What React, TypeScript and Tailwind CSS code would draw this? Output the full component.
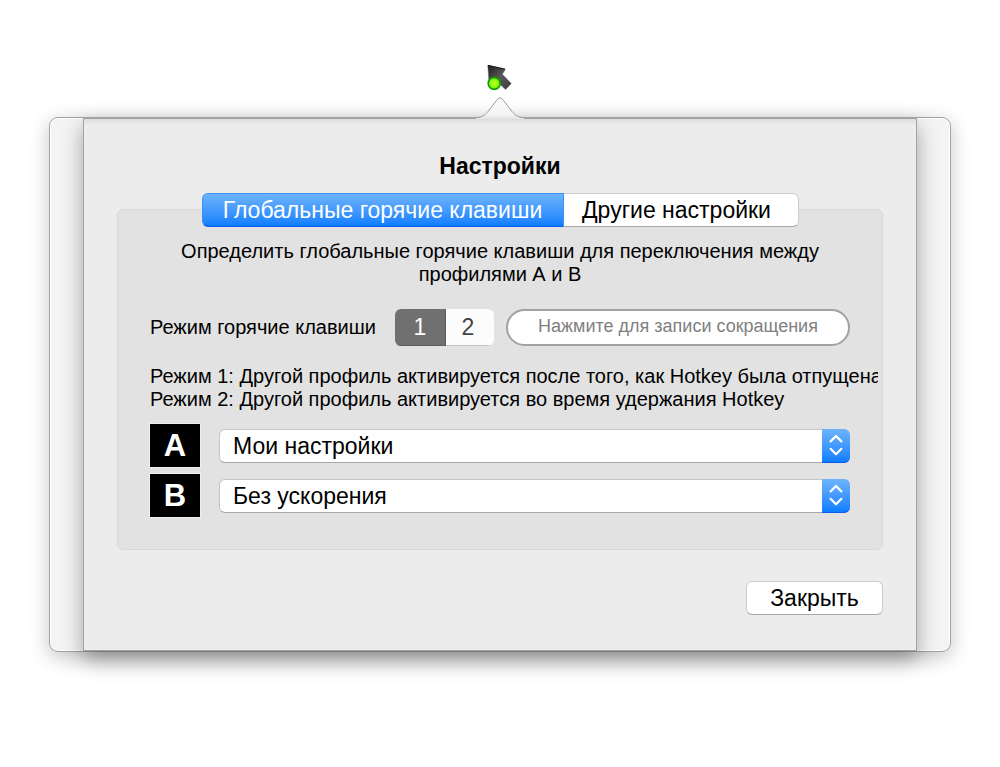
import { useState } from "react";
import type { ReactNode } from "react";

function CursorIcon() {
  return (
    <svg width="26" height="28" viewBox="0 0 26 28" aria-hidden="true">
      <defs>
        <linearGradient id="arrow" x1="0" y1="0" x2="1" y2="1">
          <stop offset="0" stopColor="#1c1c1c" />
          <stop offset="0.5" stopColor="#5a5a5a" />
          <stop offset="1" stopColor="#3c3838" />
        </linearGradient>
        <radialGradient id="dot">
          <stop offset="0" stopColor="#c8ff20" />
          <stop offset="0.6" stopColor="#8aff10" />
          <stop offset="1" stopColor="#6ee80c" />
        </radialGradient>
      </defs>
      <path d="M0.8 1.2L18.3 5.2L15.4 10.2L24.3 19.6L18.6 25.6L12 19.5L9 21L1.8 16Z" fill="url(#arrow)" stroke="#6b6b6b" strokeWidth="0.5" />
      <path d="M1 1.4L18 5.2" stroke="#111" strokeWidth="1" />
      <circle cx="7.2" cy="19.4" r="6" fill="url(#dot)" stroke="#12990c" strokeWidth="1.6" />
    </svg>
  );
}

function Notch() {
  return (
    <svg width="48" height="22" viewBox="0 0 48 22" className="relative z-10 -mb-[2px] block" aria-hidden="true">
      <defs>
        <linearGradient id="notch" x1="0" y1="0" x2="0" y2="1">
          <stop offset="0" stopColor="#fbfbfb" />
          <stop offset="0.8" stopColor="#f4f4f4" />
          <stop offset="1" stopColor="#e2e2e2" />
        </linearGradient>
      </defs>
      <path d="M0 20.5C6 20.5 9 18 12 14.5L20.5 3.5Q24 -2 27.5 3.5L36 14.5C39 18 42 20.5 48 20.5V22H0Z" fill="url(#notch)" />
      <path d="M0 20.5C6 20.5 9 18 12 14.5L20.5 3.5Q24 -2 27.5 3.5L36 14.5C39 18 42 20.5 48 20.5" fill="none" stroke="#9a9a9a" strokeWidth="1" />
    </svg>
  );
}

function ProfileRow({ letter, options }: { letter: string; options: string[] }) {
  const id = `profile-${letter}`;
  return (
    <div className="flex items-center gap-[19px]">
      <label
        htmlFor={id}
        className="flex h-[43px] w-[50px] shrink-0 items-center justify-center bg-black text-[31px] leading-none font-bold text-white shadow-[0_0_0_1px_#efefef]"
      >
        {letter}
      </label>
      <div className="relative grow">
        <select
          id={id}
          className="block h-[34px] w-full appearance-none rounded-[6px] border border-[#c6c6c6] border-b-[#a8a8a8] bg-white pr-10 pl-[13px] text-[23px] leading-[30px] text-black"
        >
          {options.map((o) => (
            <option key={o}>{o}</option>
          ))}
        </select>
        <span className="pointer-events-none absolute inset-y-0 right-0 flex w-7 items-center justify-center rounded-r-[6px] border-b border-[#0a5cf0] bg-linear-to-b from-[#6cb3fa] to-[#087eff]">
          <svg width="14" height="22" viewBox="0 0 14 22" fill="none" stroke="#fff" strokeWidth="2.2" strokeLinecap="round" strokeLinejoin="round" aria-hidden="true">
            <path d="M1.6 7.4L7 2L12.4 7.4M1.6 14.8L7 20.2L12.4 14.8" />
          </svg>
        </span>
      </div>
    </div>
  );
}

function ModeButton({ active, onClick, children }: { active: boolean; onClick: () => void; children: ReactNode }) {
  return (
    <button
      type="button"
      aria-pressed={active}
      onClick={onClick}
      className={
        active
          ? "w-[51px] border-r border-b border-[#5c5c5c] bg-[#707070] text-white"
          : "w-12 border-b border-[#c4c4c4] bg-[#fcfcfc] pr-1 text-[#444]"
      }
    >
      {children}
    </button>
  );
}

export default function App() {
  const [tab, setTab] = useState(0);
  const [mode, setMode] = useState(1);
  const on = "bg-linear-to-b from-[#6cb3fa] to-[#087eff] border-[#3d92f5] border-b-[#0a5cf0] text-white";
  const off = "bg-white border-[#cbcbcb] border-b-[#a8a8a8] text-black";

  return (
    <main className="flex min-h-screen flex-col items-center bg-white px-[49px] pt-16 pb-[116px] font-['Liberation_Sans',Arial,sans-serif] text-black">
      <CursorIcon />
      <div className="h-[5px]" />
      <Notch />
      <div className="w-full rounded-[9px] border border-[#a3a3a3] bg-[#f4f4f4] px-[33px] shadow-[0_5px_20px_rgba(0,0,0,0.24),inset_0_0_0_1px_#fff]">
        <section className="-mt-px border-x border-t-2 border-b border-[#a3a3a3] bg-[#ececec] bg-linear-to-b from-[#dcdcdc] to-[#ececec] to-[6px] px-[33px] pt-[33px] pb-[35px] shadow-[0_9px_20px_rgba(0,0,0,0.34)]">
          <h1 className="text-center text-[23px] leading-7 font-bold">Настройки</h1>
          <div role="tablist" className="relative z-10 mt-[13px] -mb-[18px] flex justify-center text-[23px] leading-8">
            <button
              type="button"
              role="tab"
              aria-selected={tab === 0}
              onClick={() => setTab(0)}
              className={`h-[34px] w-[362px] rounded-l-[6px] border whitespace-nowrap ${tab === 0 ? on : off}`}
            >
              Глобальные горячие клавиши
            </button>
            <button
              type="button"
              role="tab"
              aria-selected={tab === 1}
              onClick={() => setTab(1)}
              className={`h-[34px] w-[235px] rounded-r-[6px] border border-l-0 pr-2 whitespace-nowrap ${tab === 1 ? on : off}`}
            >
              Другие настройки
            </button>
          </div>
          <div role="tabpanel" className="rounded-[6px] border border-[#d8d8d8] bg-[#e2e2e2] pt-[30px] pb-8 pl-8">
            <p className="pr-8 text-center text-[20px] leading-[23px]">
              Определить глобальные горячие клавиши для переключения между
              <br />
              профилями А и В
            </p>
            <div className="mt-[23px] flex items-center pr-8">
              <span id="mode-label" className="w-[245px] shrink-0 pb-[2px] text-[20px] leading-6 whitespace-nowrap">Режим горячие клавиши</span>
              <div role="group" aria-labelledby="mode-label" className="flex h-[37px] shrink-0 overflow-hidden rounded-[6px] text-[23px]">
                <ModeButton active={mode === 1} onClick={() => setMode(1)}>1</ModeButton>
                <ModeButton active={mode === 2} onClick={() => setMode(2)}>2</ModeButton>
              </div>
              <input
                type="text"
                readOnly
                aria-label="Сокращение"
                placeholder="Нажмите для записи сокращения"
                className="ml-3 h-[37px] min-w-0 grow rounded-full border-2 border-[#a2a2a2] bg-white pb-[2px] text-center text-[18px] placeholder:text-[#808080]"
              />
            </div>
            <div className="mt-[19px] mr-1 overflow-hidden text-[20px] leading-[23px] whitespace-nowrap">
              <p>Режим 1: Другой профиль активируется после того, как Hotkey была отпущена</p>
              <p>Режим 2: Другой профиль активируется во время удержания Hotkey</p>
            </div>
            <div className="mt-[13px] flex flex-col gap-[7px] pr-8">
              <ProfileRow letter="A" options={["Мои настройки", "Без ускорения"]} />
              <ProfileRow letter="B" options={["Без ускорения", "Мои настройки"]} />
            </div>
          </div>
          <div className="mt-[31px] flex justify-end">
            <button type="button" className="h-[34px] w-[137px] rounded-[6px] border border-[#cbcbcb] border-b-[#a8a8a8] bg-white text-[23px] leading-8">
              Закрыть
            </button>
          </div>
        </section>
      </div>
    </main>
  );
}
